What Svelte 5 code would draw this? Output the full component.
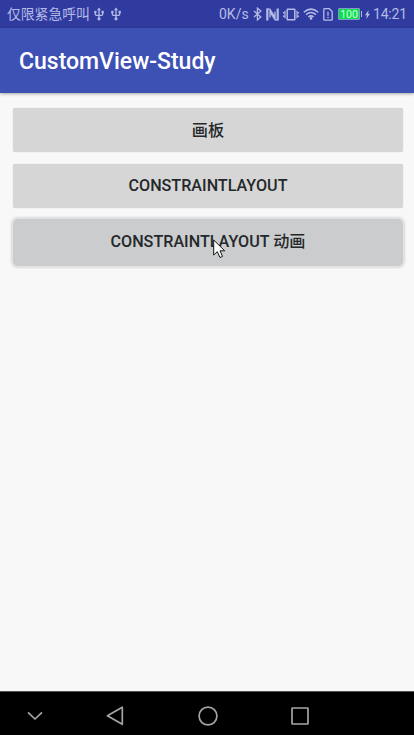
<script>
  const buttons = [
    { label: '画板' },
    { label: 'CONSTRAINTLAYOUT' },
    { label: 'CONSTRAINTLAYOUT 动画', pressed: true }
  ];
</script>

{#snippet usb()}
  <svg class="usb" width="10" height="14" viewBox="0 0 10 14">
    <path d="M5 2V12M1.3 4.5V7.2Q1.3 8.3 2.5 8.3H7.5Q8.7 8.3 8.7 7.2V4.5" fill="none" stroke="currentColor" stroke-width="1.3" />
    <path d="M5 .6L7 3.3H3Z" fill="currentColor" />
    <circle cx="1.4" cy="5" r="1.3" fill="currentColor" />
    <rect x="7.5" y="3.8" width="2.3" height="2.3" fill="currentColor" />
    <circle cx="5" cy="11.8" r="1.6" fill="currentColor" />
  </svg>
{/snippet}

<div class="screen">
  <header class="status">
    <div class="carrier">
      <span class="carrier-name">仅限紧急呼叫</span>
      {@render usb()}
      {@render usb()}
    </div>
    <div class="indicators">
      <span class="speed">0K/s</span>
      <svg class="bluetooth" width="9" height="14" viewBox="0 0 9 14" fill="none" stroke="currentColor" stroke-width="1.3">
        <path d="M1 4L7.8 10L4.4 12.9V1.1L7.8 4L1 10" />
      </svg>
      <svg class="nfc" width="13" height="13" viewBox="0 0 13 13" fill="none" stroke="currentColor">
        <path d="M1.3 .5V12.5M11.7 .5V12.5" stroke-width="2.2" />
        <path d="M1 1.2H3.9L9 9.2V3.4M12 11.8H9.1L4 3.8V9.6" stroke-width="1.3" />
      </svg>
      <svg class="vibrate" width="16" height="13" viewBox="0 0 16 13" fill="none" stroke="currentColor">
        <rect x="4.2" y="1.2" width="7.6" height="10.6" rx=".4" stroke-width="1.5" />
        <path d="M2 2.8V10.2M.6 3.9V5.6M.6 7.4V9.1M14 2.8V10.2M15.4 3.9V5.6M15.4 7.4V9.1" stroke-width="1.2" />
      </svg>
      <svg class="wifi" width="16" height="12" viewBox="0 0 16 12" fill="none" stroke="currentColor" stroke-width="1.5">
        <path d="M.8 4.2Q8-2 15.2 4.2M3.1 6.6Q8 2.3 12.9 6.6M5.4 9Q8 6.7 10.6 9" />
        <circle cx="8" cy="10.4" r="1.3" fill="currentColor" stroke="none" />
      </svg>
      <svg class="sim" width="10" height="13" viewBox="0 0 10 13" fill="none" stroke="currentColor" stroke-width="1.3">
        <path d="M.8 1.4Q.8.7 1.5.7H6.3L9.2 3.6V11.5Q9.2 12.2 8.5 12.2H1.5Q.8 12.2.8 11.5Z" />
        <path d="M5 3.8V7.7M5 8.8V10.1" />
      </svg>
      <span class="battery">100</span>
      <span class="tip"></span>
      <svg class="bolt" width="5" height="9" viewBox="0 0 5 9">
        <path d="M3.6 0L0 5.3H1.9L1.3 9L5 3.7H3.1Z" fill="currentColor" />
      </svg>
      <span class="time">14:21</span>
    </div>
  </header>
  <div class="toolbar"><h1>CustomView-Study</h1></div>
  <main>
    {#each buttons as button}
      <button class:pressed={button.pressed}>
        <span>{button.label}</span>
        {#if button.pressed}
          <svg class="cursor" width="13" height="20" viewBox="0 0 13 20">
            <path d="M.7 1V16L4.3 12.7L7 18.5L9.5 17.4L7 11.8H11.7Z" fill="#fff" stroke="#111" stroke-width="1" />
          </svg>
        {/if}
      </button>
    {/each}
  </main>
  <nav>
    <svg width="16" height="10" viewBox="0 0 16 10"><path d="M1 1.3L8 8L15 1.3" /></svg>
    <svg width="18" height="20" viewBox="0 0 18 20"><path d="M16.3 1.2V18.3L1.4 9.7Z" /></svg>
    <svg width="20" height="20" viewBox="0 0 20 20"><circle cx="10" cy="10" r="8.9" /></svg>
    <svg width="18" height="18" viewBox="0 0 18 18"><rect x="1" y="1" width="16" height="16" rx=".5" /></svg>
  </nav>
</div>

<style>
  .screen {
    width: 414px;
    height: 735px;
    display: flex;
    flex-direction: column;
    overflow: hidden;
    background: #f8f8f8;
    font-family: Roboto, "Noto Sans CJK SC", sans-serif;
  }
  .status {
    height: 28px;
    flex: none;
    box-sizing: border-box;
    padding: 0 8px 0 7px;
    display: flex;
    justify-content: space-between;
    align-items: center;
    background: #303b9f;
    color: #b5bbe6;
    line-height: 28px;
    white-space: nowrap;
  }
  .carrier, .indicators { display: flex; align-items: center; height: 28px; }
  .carrier-name { width: 83px; font-size: 13.8px; font-weight: 400; }
  .usb { margin-left: 4px; }
  .usb + .usb { margin-left: 7px; }
  .speed { width: 30px; font-size: 14px; margin-right: 4px; }
  .bluetooth { margin-right: 4px; }
  .nfc { margin-right: 4px; }
  .vibrate { margin-right: 4px; }
  .wifi { margin-right: 4px; }
  .sim { margin-right: 5px; }
  .battery {
    width: 22px;
    height: 12px;
    box-sizing: border-box;
    border: 1px solid #8994ce;
    border-radius: 1px;
    background: #08df4b;
    color: #d9ffe4;
    font-size: 10.5px;
    font-weight: 400;
    line-height: 11px;
    text-align: center;
  }
  .tip { width: 1px; height: 6px; margin: 0 3px 0 1px; background: #b5bbe6; }
  .bolt { margin-right: 3px; }
  .time { width: 33px; font-size: 14px; letter-spacing: -.2px; }
  .toolbar {
    height: 65px;
    flex: none;
    box-sizing: border-box;
    padding-left: 19px;
    display: flex;
    align-items: center;
    background: #3d50b4;
    box-shadow: 0 1px 3px #0005;
  }
  h1 { margin: 2px 0 0; color: #fff; font-size: 23px; font-weight: 500; line-height: 28px; white-space: nowrap; }
  main {
    flex: 1;
    padding: 15px 11px 0 13px;
    display: flex;
    flex-direction: column;
    gap: 12px;
  }
  button {
    position: relative;
    height: 44px;
    padding: 0;
    border: 0;
    border-radius: 3px;
    background: #d6d6d6;
    box-shadow: 0 0 1px 0 #0004;
    color: #25282a;
    font: 500 16.15px/20px Roboto, "Noto Sans CJK SC", sans-serif;
  }
  button:first-child { padding-top: 2px; }
  button.pressed {
    height: 47px;
    margin-top: -1px;
    padding-bottom: 2px;
    border-radius: 5px;
    background: #cbccce;
    box-shadow: 0 0 1px 2px #e1e1e1, 0 0 2px 3px #efefef;
  }
  .cursor { position: absolute; left: 200px; top: 20px; }
  nav {
    height: 44px;
    flex: none;
    box-sizing: border-box;
    border-top: 1px solid #555;
    padding: 5px 0 0 27px;
    display: flex;
    align-items: center;
    background: #000;
  }
  nav svg { fill: none; stroke: #a5a5a5; stroke-width: 1.7; stroke-linejoin: round; }
  nav svg:nth-child(2) { margin-left: 63px; }
  nav svg:nth-child(3) { margin-left: 74px; }
  nav svg:nth-child(4) { margin-left: 73px; }
</style>
